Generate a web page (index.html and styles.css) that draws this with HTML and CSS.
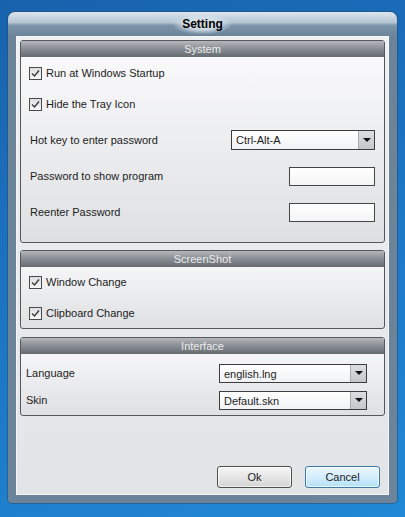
FILE: index.html
```html
<!DOCTYPE html>
<html lang="en">
<head>
    <meta charset="UTF-8">
    <title>Setting</title>
    <link rel="stylesheet" href="styles.css">
</head>
<body>
    <div class="window">
        <div class="titlebar"><span class="title">Setting</span></div>
        <div class="content">
            <!-- System -->
            <div class="group group-system">
                <div class="group-head">System</div>
                <div class="group-body body-system">
                    <label class="row check-row">
                        <span class="check"><svg width="11" height="11" viewBox="0 0 11 11"><polyline points="2,5.5 4.5,8 9,2.5" fill="none" stroke="#3a3a3a" stroke-width="1.4"/></svg></span>
                        Run at Windows Startup
                    </label>
                    <label class="row check-row">
                        <span class="check"><svg width="11" height="11" viewBox="0 0 11 11"><polyline points="2,5.5 4.5,8 9,2.5" fill="none" stroke="#3a3a3a" stroke-width="1.4"/></svg></span>
                        Hide the Tray Icon
                    </label>
                    <div class="row field-row">
                        <span class="field-label">Hot key to enter password</span>
                        <div class="combo combo-hotkey">
                            <span class="combo-text">Ctrl-Alt-A</span>
                            <span class="combo-btn"><span class="arrow"></span></span>
                        </div>
                    </div>
                    <div class="row field-row">
                        <span class="field-label">Password to show program</span>
                        <input type="password" class="textbox">
                    </div>
                    <div class="row field-row">
                        <span class="field-label">Reenter Password</span>
                        <input type="password" class="textbox">
                    </div>
                </div>
            </div>

            <!-- ScreenShot -->
            <div class="group group-shot">
                <div class="group-head">ScreenShot</div>
                <div class="group-body body-shot">
                    <label class="row check-row">
                        <span class="check"><svg width="11" height="11" viewBox="0 0 11 11"><polyline points="2,5.5 4.5,8 9,2.5" fill="none" stroke="#3a3a3a" stroke-width="1.4"/></svg></span>
                        Window Change
                    </label>
                    <label class="row check-row">
                        <span class="check"><svg width="11" height="11" viewBox="0 0 11 11"><polyline points="2,5.5 4.5,8 9,2.5" fill="none" stroke="#3a3a3a" stroke-width="1.4"/></svg></span>
                        Clipboard Change
                    </label>
                </div>
            </div>

            <!-- Interface -->
            <div class="group group-interface">
                <div class="group-head">Interface</div>
                <div class="group-body body-interface">
                    <div class="row field-row">
                        <span class="field-label">Language</span>
                        <div class="combo combo-wide">
                            <span class="combo-text">english.lng</span>
                            <span class="combo-btn"><span class="arrow"></span></span>
                        </div>
                    </div>
                    <div class="row field-row">
                        <span class="field-label">Skin</span>
                        <div class="combo combo-wide">
                            <span class="combo-text">Default.skn</span>
                            <span class="combo-btn"><span class="arrow"></span></span>
                        </div>
                    </div>
                </div>
            </div>

            <div class="buttons">
                <button type="button" class="btn">Ok</button>
                <button type="button" class="btn btn-default">Cancel</button>
            </div>
        </div>
    </div>
</body>
</html>
```

FILE: styles.css
```css
* {
    margin: 0;
    padding: 0;
    box-sizing: border-box;
}

body {
    height: 517px;
    overflow: hidden;
    background: linear-gradient(160deg, #1862ad 0%, #1c74c2 45%, #2088d6 100%);
    font-family: "Liberation Sans", Arial, sans-serif;
    font-size: 11px;
    color: #1c1c1c;
}

.window {
    margin: 12px 0 0 8px;
    width: 389px;
    height: 491px;
    padding: 0 8px 8px;
    background: #6b8499;
    border-radius: 7px 7px 4px 4px;
    box-shadow: 0 0 0 1px rgba(40, 70, 100, 0.5);
    display: flex;
    flex-direction: column;
}

.titlebar {
    height: 24px;
    margin: 0 -8px;
    border-radius: 7px 7px 0 0;
    background: linear-gradient(#dce6ee 0%, #b3c4d2 45%, #7d95a9 55%, #6b8499 100%);
    display: flex;
    align-items: center;
    justify-content: center;
}

.title {
    font-weight: bold;
    font-size: 12px;
    padding: 3px 8px;
    color: #000;
    background: radial-gradient(ellipse at center, rgba(214, 225, 234, 0.9) 40%, rgba(214, 225, 234, 0) 75%);
}

.content {
    flex: 1;
    border: 1px solid #f3f5f7;
    background: linear-gradient(#eff0f2, #e3e4e7);
    padding: 3px 3px 6px;
    display: flex;
    flex-direction: column;
}

.group {
    border: 1px solid #54585e;
    border-radius: 3px;
    background: linear-gradient(#fbfbfc, #dfe0e3);
    overflow: hidden;
}

.group-system {
    height: 203px;
    margin-bottom: 7px;
}

.group-shot {
    height: 79px;
    margin-bottom: 8px;
}

.group-interface {
    height: 79px;
}

.group-head {
    height: 16px;
    line-height: 16px;
    text-align: center;
    color: #ececec;
    font-size: 11px;
    background: linear-gradient(#b4b7bb 0%, #8c9097 45%, #666b72 100%);
}

.group-body {
    display: flex;
    flex-direction: column;
    gap: 9px;
}

.body-system {
    padding: 5px 9px 0 8px;
}

.body-shot {
    padding: 4px 9px 0 8px;
}

.body-interface {
    padding: 8px 17px 0 5px;
    gap: 5px;
}

.row {
    height: 22px;
    display: flex;
    align-items: center;
}

.check-row {
    gap: 4px;
}

.field-row {
    justify-content: space-between;
    padding-left: 1px;
}

.body-system .field-row {
    margin-top: 5px;
}

.body-interface .field-row {
    padding-left: 0;
}

.check {
    width: 13px;
    height: 13px;
    border: 1px solid #4a4a4a;
    background: linear-gradient(#dedede, #f8f8f8);
    display: flex;
    align-items: center;
    justify-content: center;
}

.combo {
    display: flex;
    border: 1px solid #3c3c3c;
    background: linear-gradient(#ffffff, #f1f2f4);
}

.combo-hotkey {
    width: 144px;
    height: 20px;
}

.combo-wide {
    width: 148px;
    height: 19px;
}

.combo-text {
    flex: 1;
    padding-left: 4px;
    line-height: 18px;
}

.combo-btn {
    width: 16px;
    background: linear-gradient(#dcdee0, #c4c7ca);
    border-left: 1px solid #a8abae;
    display: flex;
    align-items: center;
    justify-content: center;
}

.arrow {
    width: 0;
    height: 0;
    border-left: 4px solid transparent;
    border-right: 4px solid transparent;
    border-top: 4px solid #111;
}

.textbox {
    width: 86px;
    height: 19px;
    border: 1px solid #454545;
    background: linear-gradient(#ffffff, #f4f4f5);
}

.buttons {
    margin-top: auto;
    padding-right: 5px;
    display: flex;
    justify-content: flex-end;
    gap: 13px;
}

.btn {
    width: 75px;
    height: 22px;
    border: 1px solid #4e4e4e;
    border-radius: 3px;
    font-family: "Liberation Sans", Arial, sans-serif;
    font-size: 11px;
    color: #1c1c1c;
    background: linear-gradient(#f6f6f6 0%, #e6e6e6 50%, #d4d4d4 100%);
    box-shadow: inset 0 0 0 1px rgba(255, 255, 255, 0.7);
}

.btn-default {
    border-color: #3d7aa8;
    background: linear-gradient(#eaf6fd 0%, #d4eefb 50%, #b3e0f8 100%);
}
```
